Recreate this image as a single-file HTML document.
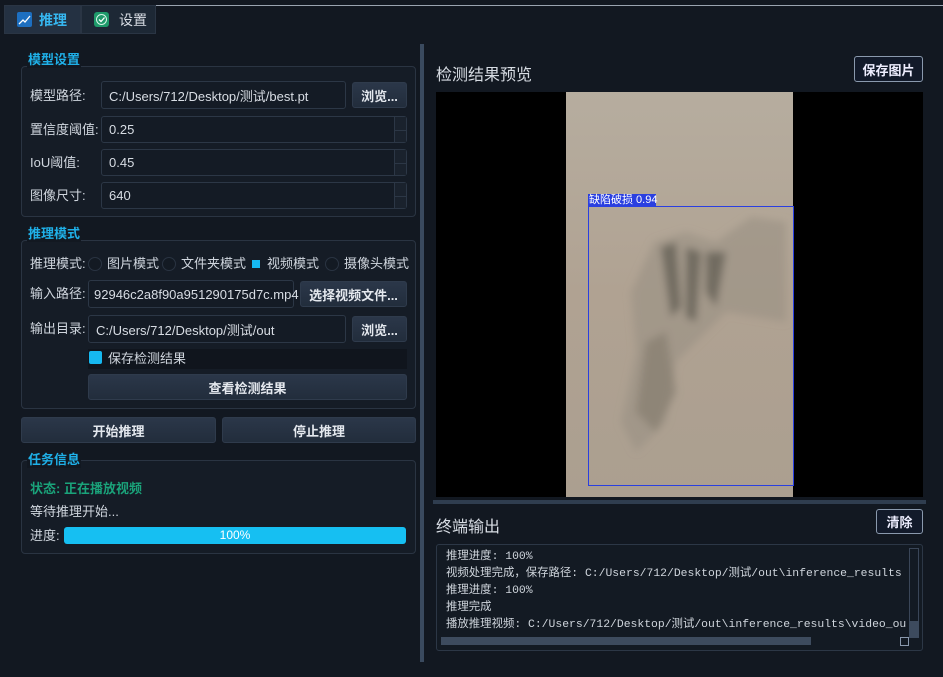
<!DOCTYPE html>
<html><head><meta charset="utf-8"><style>
*{box-sizing:border-box;margin:0;padding:0}
body{width:943px;height:677px;background:#121821;font-family:"Liberation Sans","Noto Sans CJK SC",sans-serif;color:#d8dde4;font-size:13px;position:relative;overflow:hidden}
.a{position:absolute}
.tab{position:absolute;top:5px;height:29px;background:#1d2835;border:1px solid #2a3544;font-size:14px;display:flex;align-items:center}
.grp{position:absolute;border:1px solid #2a3442;border-radius:4px;background:#151c26}
.gt{position:absolute;color:#1fb0e8;font-weight:bold;font-size:13px;background:#121821;padding:0 1px;line-height:16px}
.in{position:absolute;background:#141b25;border:1px solid #2c3746;border-radius:3px;padding-left:7px;display:flex;align-items:center;font-size:13px;color:#d8dde4}
.btn{position:absolute;background:linear-gradient(#2b3749,#222d3c);border:1px solid #2f3b4c;border-radius:3px;display:flex;align-items:center;justify-content:center;font-weight:bold;font-size:13px;color:#e4e8ee}
.lb{position:absolute;font-size:13px;color:#d0d6de;line-height:16px}
.spin{position:absolute;right:0;top:0;width:12px;height:100%;border-left:1px solid #2c3746;background:#1a222d}
.spin:after{content:"";position:absolute;left:0;right:0;top:50%;border-top:1px solid #2c3746}
.rad{position:absolute;width:14px;height:14px;border-radius:50%;border:1px solid #2a3442;background:#131a23}
.ob{position:absolute;border:1px solid #8a99ad;border-radius:3px;background:#121a2a;font-weight:bold;font-size:13px;display:flex;align-items:center;justify-content:center;color:#eef}
.mono{font-family:"Liberation Mono","Noto Sans CJK SC",monospace;font-size:11.4px;color:#cfd5dc;position:absolute;left:9px;white-space:nowrap;line-height:14px}
</style></head><body>
<div class="a" style="left:155px;top:5px;width:788px;height:1px;background:#9aa4b0"></div>
<div class="tab" style="left:4px;width:77px;background:#243142;color:#36b7f0;font-weight:bold">
<svg width="15" height="15" style="margin:0 7px 0 12px"><rect width="15" height="15" rx="2" fill="#1d6fc0"/><path d="M2 12 L6 8 L8 10 L13 4" stroke="#fff" stroke-width="1.3" fill="none"/></svg>推理</div>
<div class="tab" style="left:81px;width:75px">
<svg width="15" height="15" style="margin:0 10px 0 12px"><rect width="15" height="15" rx="3" fill="#1e9a6a"/><circle cx="7.5" cy="7.5" r="5" fill="none" stroke="#d6f5e8" stroke-width="1"/><path d="M5 7.5 L7 9.5 L10.5 5.5" stroke="#fff" stroke-width="1.3" fill="none"/></svg>设置</div>

<div class="grp" style="left:21px;top:66px;width:395px;height:151px"></div>
<div class="gt" style="left:27px;top:52px">模型设置</div>
<div class="lb" style="left:30px;top:88px">模型路径:</div>
<div class="in" style="left:101px;top:81px;width:245px;height:28px">C:/Users/712/Desktop/测试/best.pt</div>
<div class="btn" style="left:352px;top:82px;width:55px;height:26px">浏览...</div>
<div class="lb" style="left:30px;top:122px">置信度阈值:</div>
<div class="in" style="left:101px;top:116px;width:306px;height:27px">0.25<div class="spin"></div></div>
<div class="lb" style="left:30px;top:155px">IoU阈值:</div>
<div class="in" style="left:101px;top:149px;width:306px;height:27px">0.45<div class="spin"></div></div>
<div class="lb" style="left:30px;top:188px">图像尺寸:</div>
<div class="in" style="left:101px;top:182px;width:306px;height:27px">640<div class="spin"></div></div>

<div class="grp" style="left:21px;top:240px;width:395px;height:169px"></div>
<div class="gt" style="left:27px;top:226px">推理模式</div>
<div class="lb" style="left:30px;top:256px">推理模式:</div>
<div class="rad" style="left:88px;top:257px"></div><div class="lb" style="left:107px;top:256px">图片模式</div>
<div class="rad" style="left:162px;top:257px"></div><div class="lb" style="left:181px;top:256px">文件夹模式</div>
<div class="a" style="left:252px;top:260px;width:8px;height:8px;background:#16b8f0"></div><div class="lb" style="left:267px;top:256px">视频模式</div>
<div class="rad" style="left:325px;top:257px"></div><div class="lb" style="left:344px;top:256px">摄像头模式</div>
<div class="lb" style="left:30px;top:286px">输入路径:</div>
<div class="in" style="left:88px;top:280px;width:206px;height:28px;padding-left:5px">92946c2a8f90a951290175d7c.mp4</div>
<div class="btn" style="left:300px;top:281px;width:107px;height:26px">选择视频文件...</div>
<div class="lb" style="left:30px;top:321px">输出目录:</div>
<div class="in" style="left:88px;top:315px;width:258px;height:28px">C:/Users/712/Desktop/测试/out</div>
<div class="btn" style="left:352px;top:316px;width:55px;height:26px">浏览...</div>
<div class="a" style="left:88px;top:349px;width:319px;height:20px;background:#10151d"></div>
<div class="a" style="left:89px;top:351px;width:13px;height:13px;background:#16b8f0;border-radius:2px"></div>
<div class="lb" style="left:108px;top:351px">保存检测结果</div>
<div class="btn" style="left:88px;top:374px;width:319px;height:26px">查看检测结果</div>

<div class="btn" style="left:21px;top:417px;width:195px;height:26px">开始推理</div>
<div class="btn" style="left:222px;top:417px;width:194px;height:26px">停止推理</div>

<div class="grp" style="left:21px;top:460px;width:395px;height:94px"></div>
<div class="gt" style="left:27px;top:452px">任务信息</div>
<div class="lb" style="left:30px;top:481px;color:#1aa37a;font-weight:bold">状态: 正在播放视频</div>
<div class="lb" style="left:30px;top:504px">等待推理开始...</div>
<div class="lb" style="left:30px;top:528px">进度:</div>
<div class="a" style="left:64px;top:527px;width:342px;height:17px;background:#16bff2;border-radius:3px;color:#fff;font-size:12px;text-align:center;line-height:17px">100%</div>

<div class="a" style="left:420px;top:44px;width:4px;height:618px;background:#3a4a5f"></div>

<div class="a" style="left:436px;top:61px;font-size:16px;color:#d8dde4">检测结果预览</div>
<div class="ob" style="left:854px;top:56px;width:69px;height:26px">保存图片</div>
<div class="a" style="left:436px;top:92px;width:487px;height:405px;background:#000"></div>
<svg class="a" style="left:566px;top:92px" width="227" height="405">
<defs><linearGradient id="g" x1="0" y1="0" x2="0" y2="1"><stop offset="0" stop-color="#b6ad9f"/><stop offset=".5" stop-color="#b0a292"/><stop offset="1" stop-color="#ab9f90"/></linearGradient>
<filter id="b"><feGaussianBlur stdDeviation="4"/></filter></defs>
<rect width="227" height="405" fill="url(#g)"/>
<g filter="url(#b)">
<path d="M88 150 L120 140 L150 150 L185 125 L220 130 L220 230 L160 220 L140 240 L110 270 L100 330 L70 360 L55 330 L70 260 L65 200 Z" fill="#9a9183" opacity=".6"/>
<path d="M95 155 L110 150 L115 215 L105 225 Z M120 155 L135 160 L130 230 L120 225 Z M140 160 L160 160 L150 215 L140 200 Z" fill="#5e5850" opacity=".7"/>
<path d="M80 250 L100 240 L110 300 L90 340 L70 320 Z" fill="#80786c" opacity=".6"/>
</g>
</svg>
<div class="a" style="left:588px;top:206px;width:206px;height:280px;border:1.5px solid #2a3fe0"></div>
<div class="a" style="left:588px;top:194px;width:68px;height:13px;background:#2a3fe0;color:#fff;font-size:11px;line-height:13px;padding-left:1px;white-space:nowrap">缺陷破损 0.94</div>

<div class="a" style="left:433px;top:500px;width:493px;height:4px;background:#2f3d4f"></div>
<div class="a" style="left:436px;top:513px;font-size:16px;color:#d8dde4">终端输出</div>
<div class="ob" style="left:876px;top:509px;width:47px;height:25px">清除</div>
<div class="a" style="left:436px;top:544px;width:487px;height:107px;border:1px solid #2c3746;border-radius:3px;background:#131a23;overflow:hidden">
<div class="mono" style="top:5px">推理进度: 100%</div>
<div class="mono" style="top:22px">视频处理完成，保存路径: C:/Users/712/Desktop/测试/out\inference_results</div>
<div class="mono" style="top:39px">推理进度: 100%</div>
<div class="mono" style="top:56px">推理完成</div>
<div class="mono" style="top:73px">播放推理视频: C:/Users/712/Desktop/测试/out\inference_results\video_ou</div>
<div class="a" style="left:472px;top:3px;width:10px;height:90px;background:#131a23;border:1px solid #3a4658"></div>
<div class="a" style="left:472px;top:76px;width:10px;height:17px;background:#3d4b5e"></div>
<div class="a" style="left:4px;top:92px;width:466px;height:8px;background:#131a23"></div>
<div class="a" style="left:4px;top:92px;width:370px;height:8px;background:#3d4b5e"></div>
<div class="a" style="left:463px;top:92px;width:9px;height:9px;border:1px solid #8a99ad"></div>
</div>
</body></html>
